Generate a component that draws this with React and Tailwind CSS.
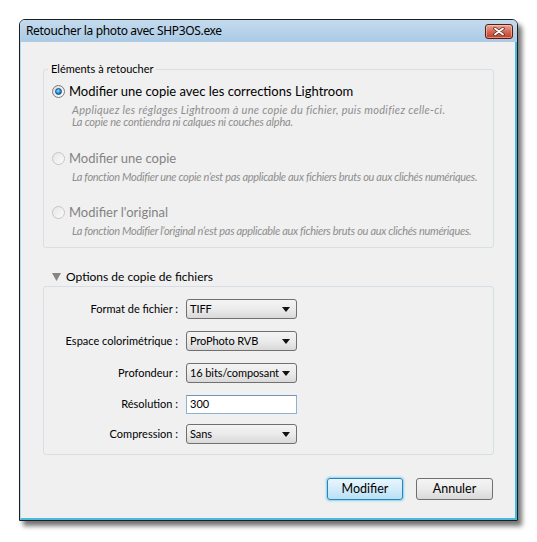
import React from "react";

const font = { fontFamily: 'Lato, "Noto Sans", sans-serif' };
const titleFont = { fontFamily: '"Segoe UI", "Noto Sans", sans-serif' };

// Vista style radio button
const Radio = ({ checked, disabled }) => (
  <span
    className={`flex h-[13px] w-[13px] shrink-0 items-center justify-center rounded-full border ${
      disabled
        ? "border-[#c6c6c6] bg-gradient-to-br from-[#e6e6e6] to-[#fbfbfb]"
        : "border-[#7a7a7a] bg-gradient-to-br from-[#dcdcdc] to-[#ffffff]"
    }`}
  >
    {checked && (
      <span className="h-[7px] w-[7px] rounded-full border border-[#0c4a86] bg-[radial-gradient(circle_at_40%_35%,#8fdcff,#1d86cf_60%,#0b5a9e)]" />
    )}
  </span>
);

const Option = ({ label, lines, checked, disabled, className }) => (
  <div className={className}>
    <div className="flex h-[20px] items-center gap-[4px] pl-[8px]">
      <Radio checked={checked} disabled={disabled} />
      <span className={`whitespace-nowrap text-[13px] leading-[20px] ${disabled ? "text-[#838383]" : "text-black"}`}>{label}</span>
    </div>
    <div className="mt-[3px] whitespace-nowrap pl-[28px] text-[11px] italic leading-[12px] text-[#8e8e8e]">
      {lines.map((l) => (
        <div key={l.text} className={l.cls}>
          {l.text}
        </div>
      ))}
    </div>
  </div>
);

const Select = ({ value }) => (
  <div className="flex h-[20px] w-[111px] items-center justify-between rounded-[3px] border border-[#707070] bg-gradient-to-b from-[#f4f4f4] via-[#ebebeb] to-[#d9d9d9] pl-[3px] pr-[6px] text-[11px] text-black">
    <span className="whitespace-nowrap tracking-[-0.1px]">{value}</span>
    <svg width="8" height="5" viewBox="0 0 8 5" className="shrink-0">
      <path d="M0 0 L8 0 L4 5 Z" fill="#111" />
    </svg>
  </div>
);

const Row = ({ label, children, className }) => (
  <div className={`flex h-[20px] items-center ${className || ""}`}>
    <span className="w-[134px] whitespace-nowrap text-right text-[11px] text-black">{label}</span>
    <div className="ml-[8px]">{children}</div>
  </div>
);

const App = () => {
  return (
    <div className="h-[542px] w-[537px] overflow-hidden bg-white pl-[19px] pt-[19px]" style={font}>
      <div className="flex h-[502px] w-[499px] flex-col rounded-t-[6px] border border-[#1e1e1e] shadow-[4px_5px_5px_rgba(0,0,0,0.55)]">
        {/* Title bar */}
        <div className="flex h-[22px] shrink-0 items-center justify-between rounded-t-[5px] bg-gradient-to-b from-[#c4dbee] to-[#abcae5] pl-[6px] pr-[4px]">
          <span className="text-[12px] leading-none tracking-[-0.35px] text-black" style={titleFont}>
            Retoucher la photo avec SHP3OS.exe
          </span>
          <div className="mt-[1px] flex h-[15px] w-[28px] items-center justify-center rounded-[3px] border border-[#5a1a10] bg-gradient-to-b from-[#eaa898] via-[#d46a55] to-[#c23a22] shadow-[inset_0_0_0_1px_rgba(255,220,210,0.5)]">
            <svg width="12" height="9" viewBox="0 0 12 9">
              <path d="M2 1.5 L10 7.5 M10 1.5 L2 7.5" stroke="#5a2a22" strokeWidth="3.4" strokeLinecap="round" />
              <path d="M2 1.5 L10 7.5 M10 1.5 L2 7.5" stroke="#ffffff" strokeWidth="1.8" strokeLinecap="round" />
            </svg>
          </div>
        </div>

        {/* Client area */}
        <div className="flex flex-1 flex-col border-b-2 border-l border-r-2 border-b-[#46b9e0] border-l-[#a8dcef] border-r-[#46b9e0] bg-[#f0f0f0] pl-[22px] pr-[21px]">
          <fieldset className="mt-[19px] rounded-[3px] border border-[#d5dfe5] pb-[10px]">
            <legend className="ml-[4px] px-[3px] text-[11px] leading-[16px] text-black">Eléments à retoucher</legend>
            <Option
              className="mt-[4px]"
              checked
              label="Modifier une copie avec les corrections Lightroom"
              lines={[
                { text: "Appliquez les réglages Lightroom à une copie du fichier, puis modifiez celle-ci.", cls: "tracking-[0.3px]" },
                { text: "La copie ne contiendra ni calques ni couches alpha.", cls: "tracking-[-0.2px]" },
              ]}
            />
            <Option
              className="mt-[20px]"
              disabled
              label="Modifier une copie"
              lines={[
                {
                  text: "La fonction Modifier une copie n’est pas applicable aux fichiers bruts ou aux clichés numériques.",
                  cls: "tracking-[-0.3px]",
                },
              ]}
            />
            <Option
              className="mt-[19px]"
              disabled
              label="Modifier l'original"
              lines={[
                {
                  text: "La fonction Modifier l’original n’est pas applicable aux fichiers bruts ou aux clichés numériques.",
                  cls: "tracking-[-0.3px]",
                },
              ]}
            />
          </fieldset>

          <div className="mt-[21px] flex h-[16px] items-center gap-[5px] pl-[9px]">
            <svg width="9" height="8" viewBox="0 0 9 8">
              <path d="M0 0 L9 0 L4.5 8 Z" fill="#858585" />
            </svg>
            <span className="text-[12px] text-black">Options de copie de fichiers</span>
          </div>

          <div className="mt-[1px] rounded-[3px] border border-[#d5dfe5] pb-[10px] pt-[12px]">
            <Row label="Format de fichier :">
              <Select value="TIFF" />
            </Row>
            <Row label="Espace colorimétrique :" className="mt-[12px]">
              <Select value="ProPhoto RVB" />
            </Row>
            <Row label="Profondeur :" className="mt-[12px]">
              <Select value="16 bits/composant" />
            </Row>
            <Row label="Résolution :" className="mt-[11px]">
              <div className="flex h-[19px] w-[111px] items-center border border-[#8db2d3] border-t-[#6f95b8] bg-white pl-[3px] text-[11px] text-black">
                300
              </div>
            </Row>
            <Row label="Compression :" className="mt-[10px]">
              <Select value="Sans" />
            </Row>
          </div>

          <div className="mt-[23px] flex justify-end gap-[13px] pr-[1px]">
            <button className="h-[22px] w-[76px] rounded-[3px] border border-[#2f83b4] bg-gradient-to-b from-[#e9f6fd] via-[#d3ecfa] to-[#b9e0f5] text-[12.5px] text-black shadow-[0_0_2px_1px_rgba(60,190,235,0.6)]">
              Modifier
            </button>
            <button className="h-[22px] w-[77px] rounded-[3px] border border-[#707070] bg-gradient-to-b from-[#f4f4f4] via-[#ebebeb] to-[#d9d9d9] text-[12.5px] text-black">
              Annuler
            </button>
          </div>
        </div>
      </div>
    </div>
  );
};

export default App;
